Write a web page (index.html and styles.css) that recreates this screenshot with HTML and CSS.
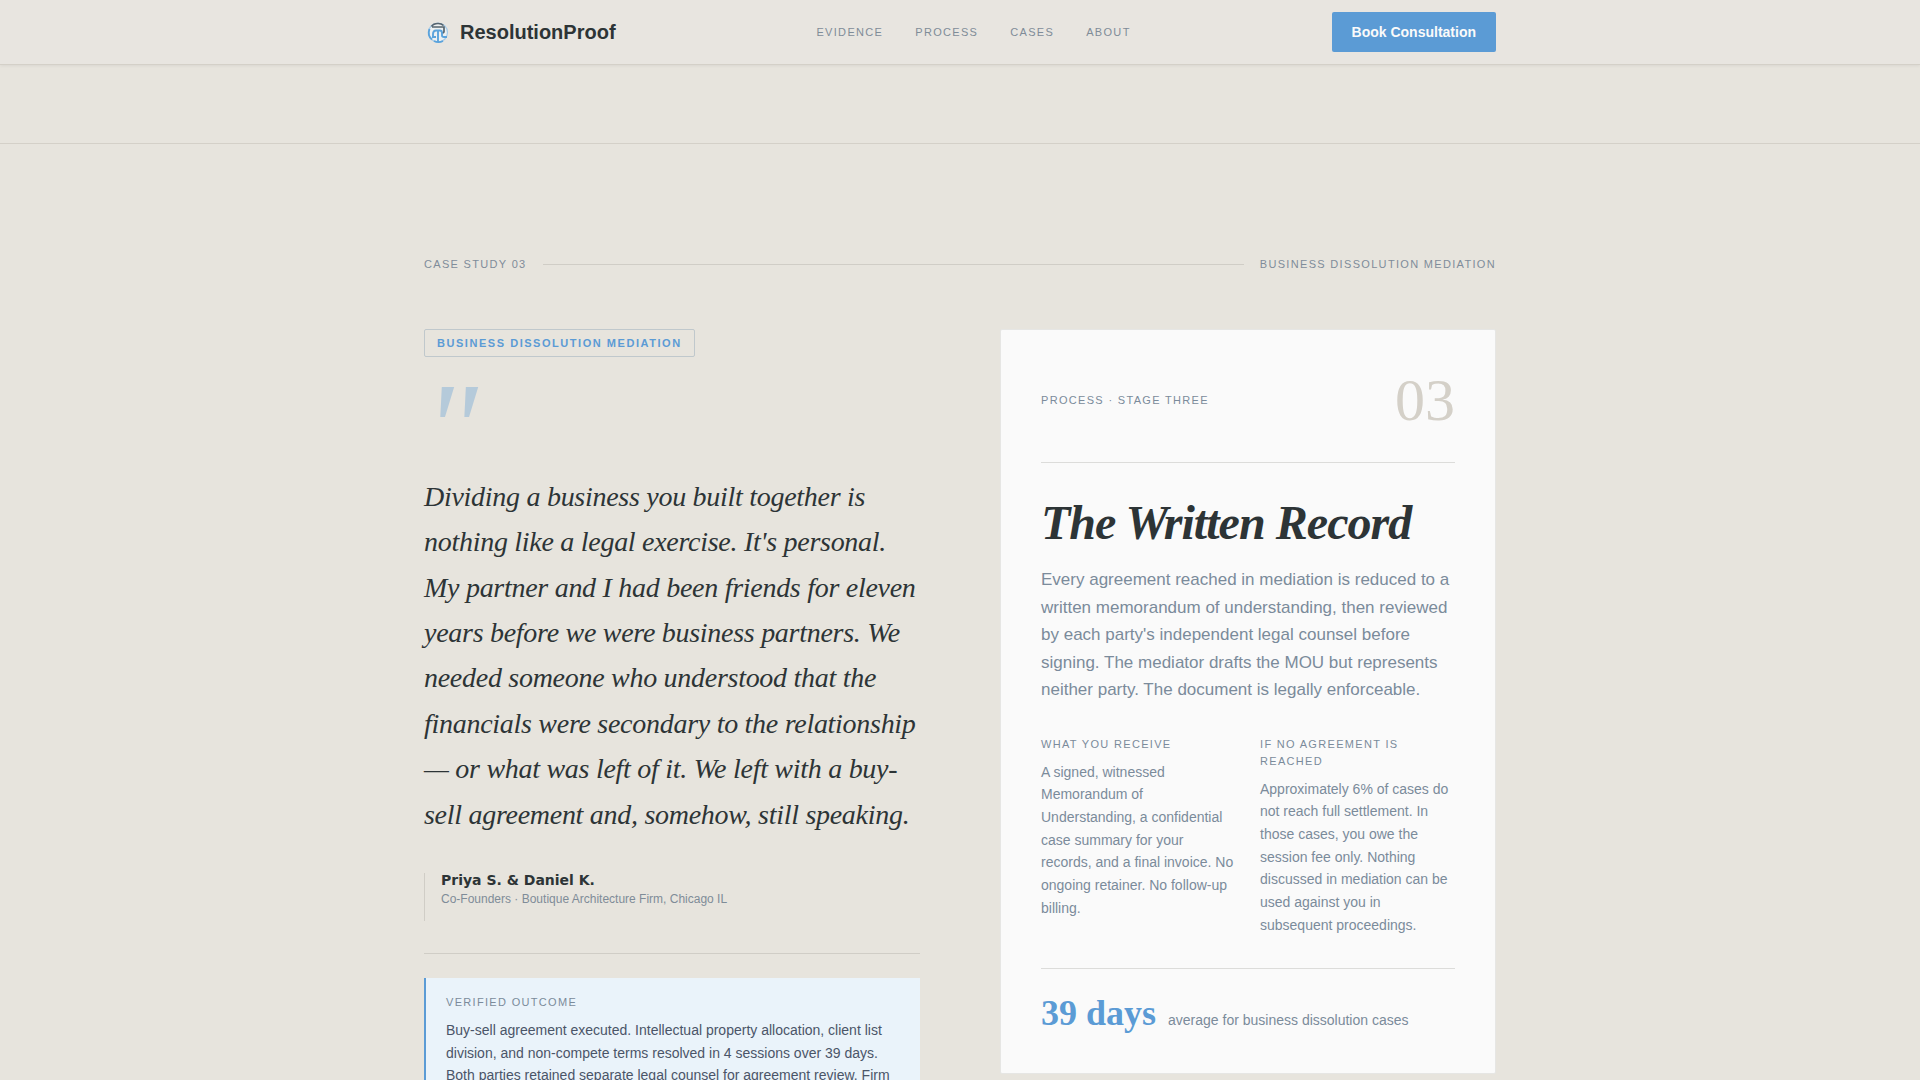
FILE: index.html
```
<!DOCTYPE html>
<html lang="en">
<head>
    <meta charset="UTF-8">
    <meta name="viewport" content="width=device-width, initial-scale=1.0">
    <title>ResolutionProof</title>
    <link rel="stylesheet" href="styles.css">
</head>
<body>

    <header class="nav">
        <div class="container nav-inner">
            <a class="logo" href="#">
                <svg class="logo-mark" viewBox="0 0 28 28" fill="none" aria-hidden="true">
                    <circle cx="14" cy="14.500" r="9.500" fill="#edf0f1" stroke="#a6cbe8" stroke-width="1.200"/>
                    <path d="M7.500 8.500C9 6 11 5.500 14 5.500s4 .5 5.500 2M8 9h12V13.500c0 1-1 1.500-2.500 1.500" stroke="#56646e" stroke-width="1.700"/>
                    <path d="M5.500 11c-1.500 4-.5 8 2.500 10.500M9 20v-4c0-2.500 1-3.500 3-3.500h2V23.500M14 12.500h2c1.500 0 2 1 2 2.500v2.500c0 1 1 1.500 2 1.500h3M8 19h4M10 23c3 1.500 6 1.500 9 0" stroke="#5ba3dc" stroke-width="1.900"/>
                </svg>
                <span>ResolutionProof</span>
            </a>
            <nav class="nav-links">
                <a href="#evidence">Evidence</a>
                <a href="#process">Process</a>
                <a href="#cases">Cases</a>
                <a href="#about">About</a>
            </nav>
            <button class="btn" type="button">Book Consultation</button>
        </div>
    </header>

    <div class="spacer"></div>

    <main class="container case">
        <div class="case-header">
            <span>Case Study 03</span>
            <span class="rule"></span>
            <span>Business Dissolution Mediation</span>
        </div>

        <div class="case-grid">
            <section class="testimonial">
                <span class="tag">Business Dissolution Mediation</span>
                <div class="quote-mark" aria-hidden="true">"</div>
                <blockquote class="quote">Dividing a business you built together is nothing like a legal exercise. It's personal. My partner and I had been friends for eleven years before we were business partners. We needed someone who understood that the financials were secondary to the relationship — or what was left of it. We left with a buy-sell agreement and, somehow, still speaking.</blockquote>
                <div class="author">
                    <p class="author-name">Priya S. &amp; Daniel K.</p>
                    <p class="author-role">Co-Founders · Boutique Architecture Firm, Chicago IL</p>
                </div>
                <div class="outcome-wrap">
                    <div class="outcome">
                        <h3 class="label">Verified Outcome</h3>
                        <p>Buy-sell agreement executed. Intellectual property allocation, client list division, and non-compete terms resolved in 4 sessions over 39 days. Both parties retained separate legal counsel for agreement review. Firm</p>
                    </div>
                </div>
            </section>

            <article class="card">
                <div class="card-top">
                    <span class="label">Process · Stage Three</span>
                    <span class="card-number">03</span>
                </div>
                <h2>The Written Record</h2>
                <p class="lead">Every agreement reached in mediation is reduced to a written memorandum of understanding, then reviewed by each party's independent legal counsel before signing. The mediator drafts the MOU but represents neither party. The document is legally enforceable.</p>
                <div class="details">
                    <div>
                        <h3 class="label">What You Receive</h3>
                        <p>A signed, witnessed Memorandum of Understanding, a confidential case summary for your records, and a final invoice. No ongoing retainer. No follow-up billing.</p>
                    </div>
                    <div>
                        <h3 class="label">If No Agreement Is Reached</h3>
                        <p>Approximately 6% of cases do not reach full settlement. In those cases, you owe the session fee only. Nothing discussed in mediation can be used against you in subsequent proceedings.</p>
                    </div>
                </div>
                <div class="stat">
                    <strong>39 days</strong>
                    <span>average for business dissolution cases</span>
                </div>
            </article>
        </div>
    </main>

</body>
</html>
```
FILE: styles.css
```
* { box-sizing: border-box; margin: 0; padding: 0; }
body { font-family: "Liberation Sans", Arial, sans-serif; background-color: #e7e4dd; color: #2d3436; line-height: 1.62; overflow-x: hidden; }
a { color: inherit; text-decoration: none; }
.container { max-width: 1200px; margin: 0 auto; padding: 0 64px; }

/* Navigation */
.nav { background-color: #e8e5e0; border-bottom: 1px solid #d4d0c8; box-shadow: 0 1px 3px rgba(0, 0, 0, 0.06); }
.nav-inner { display: flex; align-items: center; justify-content: space-between; height: 64px; }
.logo { display: flex; align-items: center; gap: 8px; font-size: 20px; font-weight: bold; }
.logo-mark { width: 28px; height: 28px; }
.nav-links { display: flex; gap: 32px; font-size: 11px; letter-spacing: 0.12em; line-height: 16px; text-transform: uppercase; color: #7f8c98; }
.btn { height: 40px; padding: 0 20px; border: 0; border-radius: 2px; background-color: #5b9bd5; color: #fafafa; font-family: inherit; font-size: 14px; font-weight: bold; cursor: pointer; }

.spacer { height: 79px; border-bottom: 1px solid #d4d0c8; }

/* Case study */
.case { padding-top: 112px; padding-bottom: 112px; }
.case-header { display: flex; align-items: center; gap: 16px; margin-bottom: 56px; font-size: 11px; letter-spacing: 0.12em; line-height: 17px; text-transform: uppercase; color: #7f8c9a; }
.rule { flex: 1; height: 1px; background-color: #d0cdc6; }
.case-grid { display: grid; grid-template-columns: 1fr 1fr; gap: 80px; align-items: start; }

.label { font-size: 11px; font-weight: normal; letter-spacing: 0.12em; line-height: 17px; text-transform: uppercase; color: #7b8b9b; }

.testimonial { display: flex; flex-direction: column; }
.tag { align-self: flex-start; padding: 5px 12px; border: 1px solid #c0c8cc; border-radius: 2px; font-size: 11px; font-weight: bold; letter-spacing: 0.14em; line-height: 16px; text-transform: uppercase; color: #5b9bd5; }
.quote-mark { margin-top: 23px; font-family: "Liberation Serif", Georgia, serif; font-size: 128px; font-style: italic; line-height: 94px; color: #5b9bd5; opacity: 0.35; }
.quote { font-family: "Liberation Serif", Georgia, serif; font-size: 28px; font-style: italic; letter-spacing: -0.01em; line-height: 1.62; }
.author { margin-top: 36px; padding: 0 0 12px 16px; border-left: 1px solid #d0cdc6; }
.author-name { font-family: "DejaVu Sans", sans-serif; font-size: 14px; font-weight: bold; line-height: 14px; }
.author-role { margin-top: 3px; font-size: 12px; line-height: 19px; color: #7f8c98; }
.outcome-wrap { margin-top: 32px; padding-top: 24px; border-top: 1px solid #d0cdc6; }
.outcome { padding: 16px 20px; border-left: 2px solid #5b9bd5; background-color: #eaf3fa; }
.outcome p { margin-top: 8px; font-size: 14px; color: #4a5568; }

/* Process card */
.card { padding: 40px; border: 1px solid #e6e6e4; border-radius: 2px; background-color: #fafafa; color: #7b8b9b; }
.card-top { display: flex; align-items: center; justify-content: space-between; margin-bottom: 32px; padding-bottom: 32px; border-bottom: 1px solid #dcdcda; }
.card-number { font-family: "Liberation Serif", Georgia, serif; font-size: 60px; line-height: 60px; color: #d4d0c8; }
.card h2 { margin-bottom: 16px; font-family: "Liberation Serif", Georgia, serif; font-size: 48px; font-style: italic; letter-spacing: -0.02em; line-height: 55px; color: #2d3436; }
.lead { font-size: 17px; }
.details { display: grid; grid-template-columns: 1fr 1fr; gap: 24px; margin-top: 32px; font-size: 14px; }
.details p { margin-top: 8px; }
.stat { display: flex; align-items: baseline; gap: 12px; margin-top: 32px; padding-top: 24px; border-top: 1px solid #dcdcda; font-size: 14px; }
.stat strong { font-family: "Liberation Serif", Georgia, serif; font-size: 36px; line-height: 40px; color: #5b9bd5; }
```
